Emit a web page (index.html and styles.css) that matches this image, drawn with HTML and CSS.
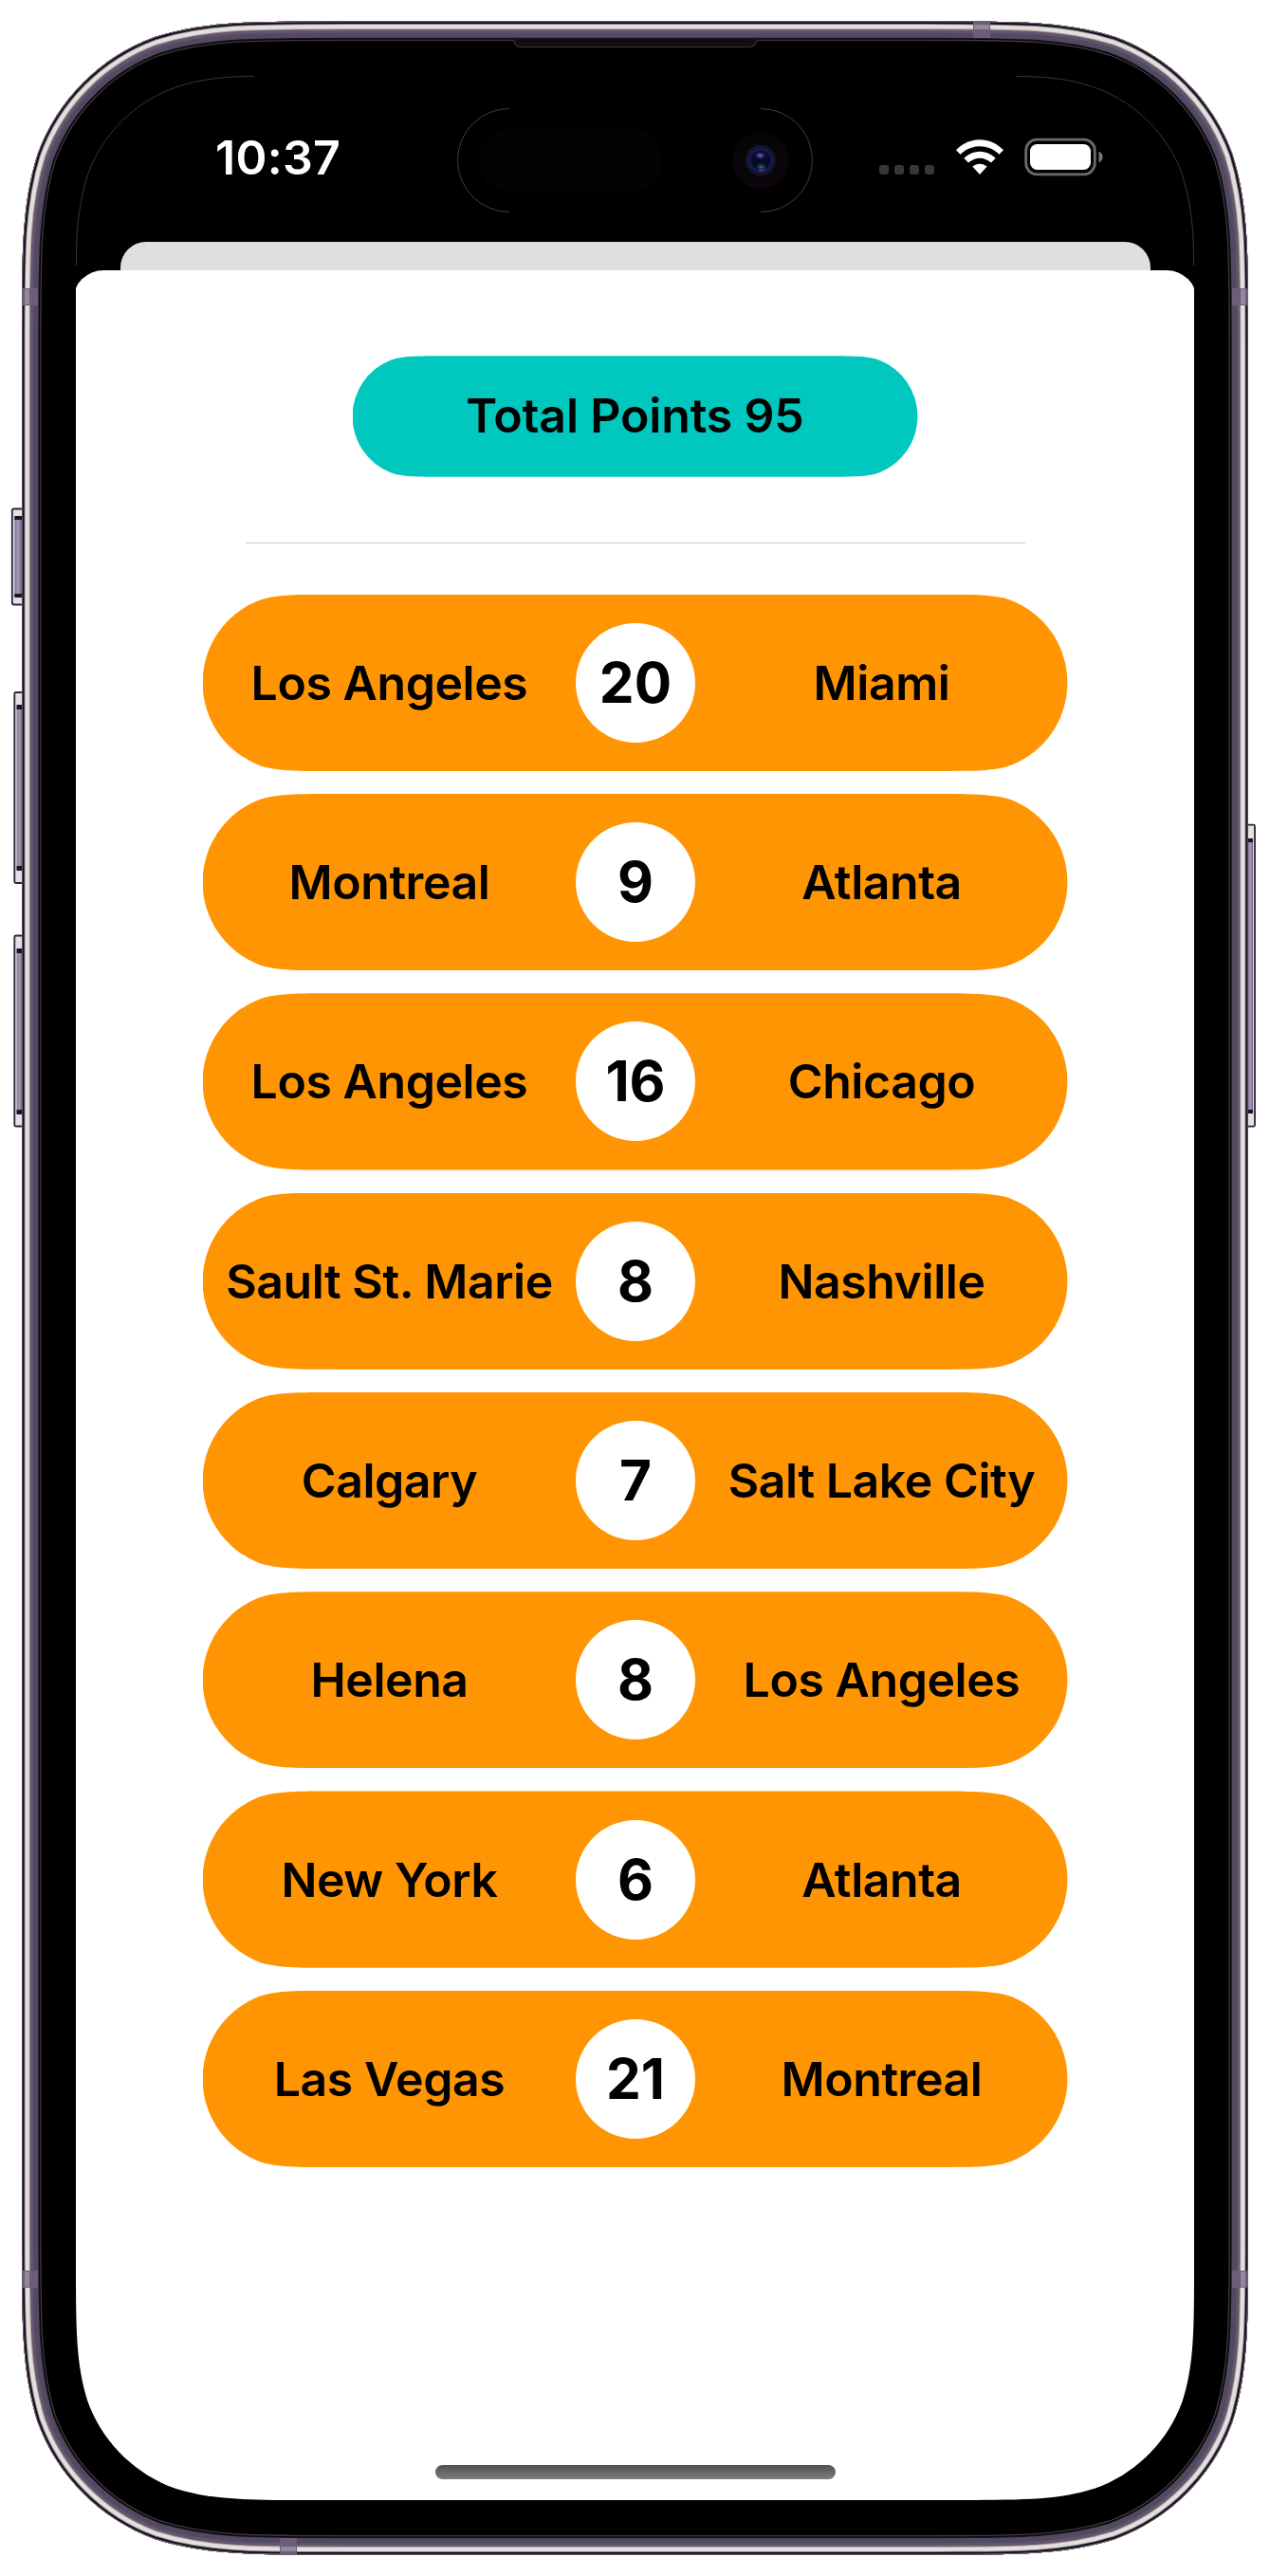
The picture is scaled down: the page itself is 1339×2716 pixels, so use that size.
FILE: index.html
```html
<!DOCTYPE html>
<html lang="en">
<head>
<meta charset="utf-8">
<title>Total Points</title>
<link rel="stylesheet" href="styles.css">
</head>
<body>
<div class="phone">
  <svg class="frame" width="1339" height="2716" viewBox="0 0 1339 2716" aria-hidden="true">
    <defs>
      <linearGradient id="key" x1="0" x2="1" y1="0" y2="0">
        <stop offset="0" stop-color="#85799a"/><stop offset=".5" stop-color="#a598b5"/><stop offset="1" stop-color="#6d6180"/>
      </linearGradient>
      <path id="body" d="M362.4 22.5H976.6C1074.3 22.5 1123.2 22.5 1175.8 39.1C1233.2 60 1278.5 105.3 1299.4 162.7C1316 215.3 1316 264.2 1316 361.9V2354.1C1316 2451.8 1316 2500.7 1299.4 2553.3C1278.5 2610.7 1233.2 2656 1175.8 2676.9C1123.2 2693.5 1074.3 2693.5 976.6 2693.5H362.4C264.7 2693.5 215.8 2693.5 163.2 2676.9C105.8 2656 60.5 2610.7 39.6 2553.3C23 2500.7 23 2451.8 23 2354.1V361.9C23 264.2 23 215.3 39.6 162.7C60.5 105.3 105.8 60 163.2 39.1C215.8 22.5 264.7 22.5 362.4 22.5Z"/>
      <clipPath id="bodyclip"><use href="#body"/></clipPath>
    </defs>
    <g id="left-keys">
      <rect x="12.8" y="536.5" width="14" height="101" rx="2" fill="#e5e0e6" stroke="#2b2138" stroke-width="1.8"/>
      <rect x="15.3" y="545" width="8" height="84" fill="url(#key)"/>
      <path d="M15.3 544h8v4h-8zM15.3 626h8v4h-8z" fill="#1a1226"/>
      <rect x="15.3" y="730" width="12" height="201" rx="1.5" fill="#e5e0e6" stroke="#2b2138" stroke-width="1.8"/>
      <rect x="17.6" y="744" width="6" height="173" fill="url(#key)"/>
      <path d="M17.6 743h6v5h-6zM17.6 913h6v5h-6z" fill="#1a1226"/>
      <rect x="15.3" y="986.5" width="12" height="201" rx="1.5" fill="#e5e0e6" stroke="#2b2138" stroke-width="1.8"/>
      <rect x="17.6" y="1001" width="6" height="173" fill="url(#key)"/>
      <path d="M17.6 1000h6v5h-6zM17.6 1170h6v5h-6z" fill="#1a1226"/>
    </g>
    <rect x="1311" y="869.7" width="12" height="318" rx="1.5" fill="#e5e0e6" stroke="#2b2138" stroke-width="1.8"/>
    <rect x="1316" y="884" width="5" height="290" fill="url(#key)"/>
    <path d="M1316 884h5v4h-5zM1316 1170h5v4h-5z" fill="#1a1226"/>
    <use href="#body" fill="#000"/>
    <g clip-path="url(#bodyclip)" fill="none">
      <use href="#body" stroke="#3c3c3c" stroke-width="41"/>
      <use href="#body" stroke="#050409" stroke-width="38.4"/>
      <use href="#body" stroke="#1d1527" stroke-width="36.4"/>
      <use href="#body" stroke="#534a61" stroke-width="34.6"/>
      <use href="#body" stroke="#60566d" stroke-width="24"/>
      <use href="#body" stroke="#a8958f" stroke-width="17.6"/>
      <use href="#body" stroke="#e1e0e0" stroke-width="15.4"/>
      <use href="#body" stroke="#8d7680" stroke-width="7"/>
      <use href="#body" stroke="#120a1c" stroke-width="5"/>
      <use href="#body" stroke="#777078" stroke-width="1.4"/>
      <path fill="#6b5f77" d="M23 304h17v18H23zM1299 304h17v18h-17zM23 2394h17v18H23zM1299 2394h17v18h-17zM1026 22h18v18h-18zM295 2676h18v18h-18z"/>
      <path fill="#a498af" d="M26 305h5v16h-5zM1308 305h5v16h-5zM26 2395h5v16h-5zM1308 2395h5v16h-5zM1027 26h16v5h-16zM296 2685h16v5h-16z" opacity=".7"/>
    </g>
    <path d="M541 41.5c2 4 3 8.5 7.5 8.5H791c4.500 0 5.500-4.500 7.500-8.500z" fill="#101010"/>
    <path d="M541 42c2 4 3 7.700 7.500 7.700H791c4.500 0 5.500-3.700 7.500-7.700" fill="none" stroke="#333" stroke-width="1.2"/>
  </svg>

  <main class="screen">
    <header class="status">
      <span class="clock">10:37</span>
      <svg class="indicators" width="240" height="44" viewBox="0 0 240 44" aria-hidden="true">
        <g fill="#373737"><rect x="2" y="30" width="10" height="10" rx="3"/><rect x="18" y="30" width="10" height="10" rx="3"/><rect x="34" y="30" width="10" height="10" rx="3"/><rect x="50" y="30" width="10" height="10" rx="3"/></g>
        <g fill="#fff">
          <path d="M83 14.200C97 -.4 119 -.4 133 14.200L128.500 18.700C117 7.400 99 7.400 87.500 18.700Z"/>
          <path d="M91.300 22.700C101 13.500 115 13.500 124.700 22.700L120 27.500C112.500 21 103.500 21 96 27.500Z"/>
          <path d="M100.300 31.600C105 27.700 111 27.700 115.700 31.600L108 40Z"/>
          <rect x="161" y="8" width="64" height="27" rx="7.500"/>
        </g>
        <rect x="156.700" y="3.200" width="72.600" height="36.600" rx="11.500" fill="none" stroke="#6b6b6b" stroke-width="2.800"/>
        <path d="M233.500 15.500c5.500 2.500 5.500 9.500 0 12z" fill="#777"/>
      </svg>
    </header>
    <div class="backdrop"></div>
    <section class="sheet">
      <h1 class="total">Total Points 95</h1>
      <hr class="rule">
      <ul class="routes">
        <li class="route"><span class="city">Los Angeles</span><b class="points">20</b><span class="city">Miami</span></li>
        <li class="route"><span class="city">Montreal</span><b class="points">9</b><span class="city">Atlanta</span></li>
        <li class="route"><span class="city">Los Angeles</span><b class="points">16</b><span class="city">Chicago</span></li>
        <li class="route"><span class="city">Sault St. Marie</span><b class="points">8</b><span class="city">Nashville</span></li>
        <li class="route"><span class="city">Calgary</span><b class="points">7</b><span class="city">Salt Lake City</span></li>
        <li class="route"><span class="city">Helena</span><b class="points">8</b><span class="city">Los Angeles</span></li>
        <li class="route"><span class="city">New York</span><b class="points">6</b><span class="city">Atlanta</span></li>
        <li class="route"><span class="city">Las Vegas</span><b class="points">21</b><span class="city">Montreal</span></li>
      </ul>
      <div class="home"></div>
    </section>
  </main>

  <svg class="island" width="1179" height="260" viewBox="80 79 1179 260" aria-hidden="true">
    <defs>
      <radialGradient id="lens"><stop offset="0" stop-color="#080820"/><stop offset=".6" stop-color="#090a2c"/><stop offset=".72" stop-color="#172063"/><stop offset=".8" stop-color="#14152b"/><stop offset="1" stop-color="#121322"/></radialGradient>
      <radialGradient id="shine"><stop offset="0" stop-color="#7478d8"/><stop offset="1" stop-color="#30358a" stop-opacity="0"/></radialGradient>
      <radialGradient id="glow"><stop offset="0" stop-color="#258075"/><stop offset="1" stop-color="#103a58" stop-opacity="0"/></radialGradient>
      <linearGradient id="housing" x2="0" y2="1"><stop offset="0" stop-color="#050505"/><stop offset="1" stop-color="#0d050e"/></linearGradient>
    </defs>
    <g fill="none" stroke="#444" stroke-width=".8">
      <path d="M80.500 280C80.500 255 80.500 223 92.400 184.200C107.900 141.500 141.500 107.900 184.200 92.400C212 83 235 80.800 268 80.400"/>
      <path d="M1258.500 280C1258.500 255 1258.500 223 1246.600 184.200C1231.100 141.500 1197.500 107.900 1154.800 92.400C1127 83 1104 80.800 1071 80.400"/>
      <path d="M537 114.500A54.500 54.500 0 0 0 537 223.500M802 114.500a54.500 54.500 0 0 1 0 109" stroke="#4c4c4c"/>
    </g>
    <rect x="504" y="136" width="194" height="66" rx="33" fill="#030303"/>
    <circle cx="802" cy="169" r="30" fill="url(#housing)"/>
    <circle cx="802" cy="169" r="16.300" fill="url(#lens)"/>
    <ellipse cx="801.500" cy="164" rx="6.500" ry="4" fill="url(#shine)"/>
    <ellipse cx="802.500" cy="176" rx="6" ry="4.500" fill="url(#glow)"/>
    <ellipse cx="803" cy="179.500" rx="3.500" ry="1.300" fill="#73209c" opacity=".8"/>
  </svg>
</div>
</body>
</html>
```
FILE: styles.css
```css
* { box-sizing: border-box; }

body {
  margin: 0;
  background: #fff;
  color: #000;
  font-family: Inter, "Liberation Sans", sans-serif;
}

.phone {
  position: relative;
  width: 1339px;
  height: 2716px;
  padding: 80px;
}

.frame {
  position: absolute;
  inset: 0;
}

/* Display area with continuous corners */
.screen {
  position: relative;
  display: flex;
  flex-direction: column;
  width: 1179px;
  height: 2556px;
  background: #000;
  clip-path: path("M252.200 0H926.800C999.400 0 1035.700 0 1074.800 12.400C1117.500 27.900 1151.100 61.500 1166.600 104.200C1179 143.300 1179 179.600 1179 252.200V2303.800C1179 2376.400 1179 2412.700 1166.600 2451.800C1151.100 2494.500 1117.500 2528.100 1074.800 2543.600C1035.700 2556 999.400 2556 926.800 2556H252.200C179.600 2556 143.300 2556 104.200 2543.600C61.500 2528.100 27.900 2494.500 12.400 2451.800C0 2412.700 0 2376.400 0 2303.800V252.200C0 179.600 0 143.300 12.400 104.200C27.900 61.500 61.500 27.900 104.200 12.400C143.300 0 179.600 0 252.200 0Z");
}

.status {
  display: flex;
  align-items: center;
  justify-content: space-between;
  height: 175px;
  padding: 0 94px 3px 147px;
}

.clock {
  color: #fff;
  font-size: 50px;
  font-weight: 600;
  letter-spacing: 0.3px;
  line-height: 60px;
}

.backdrop {
  height: 30px;
  margin: 0 46.5px;
  border-radius: 27px 27px 0 0;
  background: #dfdfdf;
}

.sheet {
  display: flex;
  flex: 1;
  flex-direction: column;
  align-items: center;
  margin: 0 -3px;
  padding: 90.3px 0 22px;
  border-radius: 32px 32px 0 0;
  background: #fff;
}

.total {
  width: 596px;
  height: 127.4px;
  margin: 0;
  background: #00c8be;
  clip-path: path("M97.400 0H498.600C526.700 0 544.400 0 555.800 4.500A63.700 63.700 0 0 1 555.800 122.900C544.400 127.400 526.700 127.400 498.600 127.400H97.400C69.300 127.400 51.600 127.400 40.200 122.900A63.700 63.700 0 0 1 40.200 4.500C51.600 0 69.300 0 97.400 0Z");
  font-size: 50px;
  font-weight: 600;
  letter-spacing: -0.15px;
  line-height: 127px;
  text-align: center;
}

.rule {
  width: 822px;
  height: 1px;
  margin: 69px 0 54px;
  border: 0;
  background: #c8c8c8;
}

.routes {
  display: flex;
  flex-direction: column;
  gap: 24px;
  margin: 0;
  padding: 0;
  list-style: none;
}

.route {
  display: grid;
  grid-template-columns: 1fr 126px 1fr;
  align-items: center;
  width: 912px;
  height: 186.3px;
  background: #ff9502;
  clip-path: path("M142.400 0H769.600C810.600 0 836.500 0 853.200 6.600A93.150 93.150 0 0 1 853.200 179.700C836.500 186.300 810.600 186.300 769.600 186.300H142.400C101.400 186.300 75.500 186.300 58.800 179.700A93.150 93.150 0 0 1 58.800 6.600C75.500 0 101.400 0 142.400 0Z");
  font-size: 50px;
  font-weight: 600;
}

.city {
  padding-left: 1px;
  letter-spacing: -0.45px;
  text-align: center;
  white-space: nowrap;
}

.points {
  width: 126px;
  height: 126px;
  padding-left: 1px;
  border-radius: 50%;
  background: #fff;
  font-size: 58.5px;
  font-weight: 700;
  line-height: 125px;
  text-align: center;
}

.home {
  width: 422px;
  height: 15px;
  margin-top: auto;
  border-radius: 8px;
  background: linear-gradient(#505050, #7d7d7d);
}

.island {
  position: absolute;
  top: 79px;
  left: 80px;
}
```
